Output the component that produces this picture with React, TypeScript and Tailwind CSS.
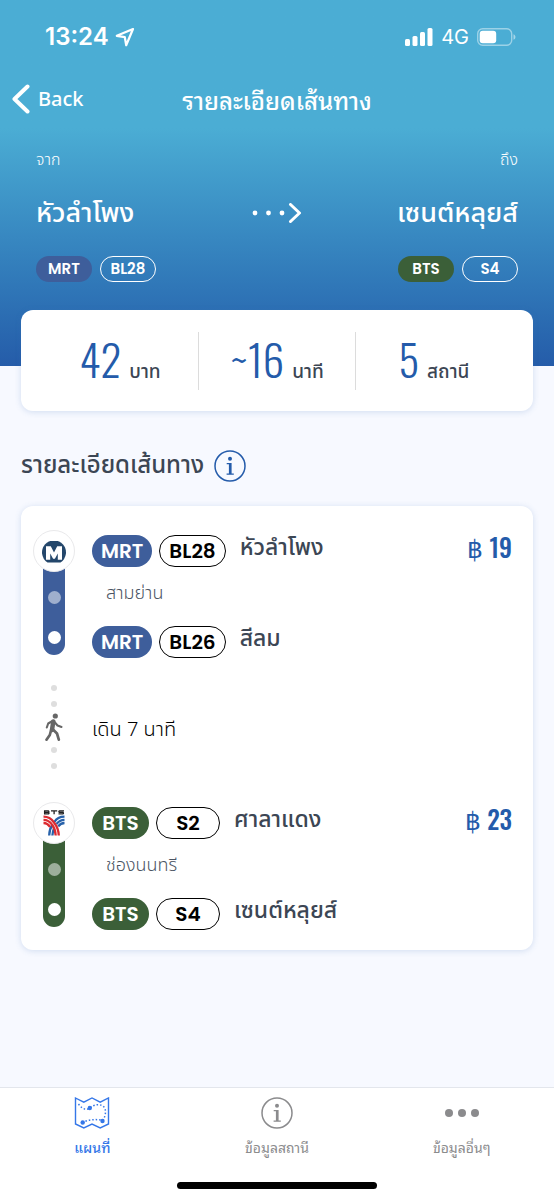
import type { ReactNode } from "react";

const THAI = "font-['Noto_Sans_Thai','Noto_Sans',sans-serif]";
const LOOPED = "font-['Noto_Sans_Thai_Looped','Loma','Garuda','Noto_Serif_Thai','Noto_Sans_Thai',sans-serif]";
const NARROW = "font-['Oswald','Roboto_Condensed','Liberation_Sans_Narrow',sans-serif]";
const LATIN = "font-['Poppins','Inter',sans-serif]";

type Line = "MRT" | "BTS";

const lineFill: Record<Line, string> = {
  MRT: "bg-[#3e5e9b]",
  BTS: "bg-[#3b5f38]",
};

function StatusBar() {
  return (
    <div className="flex h-[74px] items-center justify-between pr-[38px] pl-[45px] font-['Inter',sans-serif]">
      <div className="flex items-center gap-1.5 text-2xl font-semibold">
        <span>13:24</span>
        <svg className="h-5 w-5" viewBox="0 0 20 20" fill="none" stroke="currentColor" strokeWidth="2.2" strokeLinejoin="round" aria-hidden="true">
          <path d="M18 2 1.8 8.8 9.8 10.2 11.2 18.2Z" />
        </svg>
      </div>
      <div className="flex items-center gap-2">
        <svg className="h-[18px] w-7" viewBox="0 0 28 18" fill="currentColor" aria-hidden="true">
          <rect x="0" y="11" width="5" height="7" rx="1.5" />
          <rect x="7.5" y="8" width="5" height="10" rx="1.5" />
          <rect x="15" y="4" width="5" height="14" rx="1.5" />
          <rect x="22.5" y="0" width="5" height="18" rx="1.5" />
        </svg>
        <span className="text-xl">4G</span>
        <svg className="h-[18px] w-[39px]" viewBox="0 0 39 18" aria-hidden="true">
          <rect x="0.7" y="0.7" width="34" height="16.6" rx="5" fill="none" stroke="#fff" strokeOpacity="0.45" strokeWidth="1.4" />
          <path d="M36.5 6.2c2.6 1 2.6 4.6 0 5.6Z" fill="#fff" fillOpacity="0.5" />
          <rect x="2.7" y="2.7" width="16.5" height="12.6" rx="3" fill="#fff" />
        </svg>
      </div>
    </div>
  );
}

function SmallBadges({ line, code }: { line: Line; code: string }) {
  return (
    <div className={`${LATIN} flex gap-2 text-[15px] font-semibold`}>
      <span className={`flex h-[26px] w-14 items-center justify-center rounded-full ${lineFill[line]}`}>{line}</span>
      <span className="flex h-[26px] w-14 items-center justify-center rounded-full border border-white">{code}</span>
    </div>
  );
}

function Stat({ value, unit }: { value: string; unit: string }) {
  return (
    <div className="flex h-[58px] flex-1 items-center justify-center">
      <p className="flex items-baseline gap-2">
        <span className={`${NARROW} text-[43px] leading-[50px] font-light text-[#245baa]`}>{value}</span>
        <span className={`${THAI} text-[19px] font-medium text-[#3c4654]`}>{unit}</span>
      </p>
    </div>
  );
}

function Station({ line, code, name, price }: { line: Line; code: string; name: string; price?: string }) {
  return (
    <div className={`${LATIN} flex h-8 items-center text-xl font-semibold`}>
      <span className={`flex h-8 min-w-[57px] items-center justify-center rounded-full px-[9px] text-white ${lineFill[line]}`}>{line}</span>
      <span className="ml-[7px] flex h-8 min-w-16 items-center justify-center rounded-full border border-black px-[9px] text-black">{code}</span>
      <span className={`${THAI} ml-3.5 pb-1.5 text-[23px] font-medium text-[#3c4654]`}>{name}</span>
      {price && (
        <span className={`${NARROW} ml-auto pb-2.5 text-[25px] font-medium text-[#245baa]`}>
          <span className="font-normal">฿</span> {price}
        </span>
      )}
    </div>
  );
}

function Leg({ line, logo, children }: { line: Line; logo: ReactNode; children: ReactNode }) {
  return (
    <div className="flex gap-[17px]">
      <div className="flex h-[125px] w-[42px] flex-col items-center">
        <div className="z-10 flex h-[42px] w-[42px] shrink-0 items-center justify-center rounded-full border border-[#e9e9eb] bg-white">{logo}</div>
        <div className={`-mt-1 flex w-[22px] flex-1 flex-col items-center justify-between rounded-b-full pt-[23px] pb-[11px] ${lineFill[line]}`}>
          <span className="h-[13px] w-[13px] rounded-full bg-white/50" />
          <span className="h-[13px] w-[13px] rounded-full bg-white" />
        </div>
      </div>
      <div className="min-w-0 flex-1 pt-[5px]">{children}</div>
    </div>
  );
}

function Stop({ name }: { name: string }) {
  return <p className={`${THAI} flex h-[59px] items-center pb-1.5 pl-3.5 text-lg font-light text-[#4b5563]`}>{name}</p>;
}

function MrtLogo() {
  return (
    <svg className="mt-1 h-6 w-6" viewBox="0 0 24 24" role="img" aria-label="MRT">
      <path d="M5.500 21.500A12 12 0 1 1 18.500 21.500Z" fill="#24476b" />
      <path d="M4 18.800V5.200H8.800L12 11.500 15.200 5.200H20V18.800H15.800V12.500L12.900 17.800H11.100L8.200 12.500V18.800Z" fill="#fff" />
    </svg>
  );
}

function BtsLogo() {
  return (
    <svg className="h-[26px] w-[22px]" viewBox="0 0 22 26" fill="none" role="img" aria-label="BTS">
      <g stroke="#222" strokeWidth="1.3">
        <path d="M1 .8H5.300Q6.500 1.700 5.300 2.400H1.500M1 3.900H5.400Q6.600 3.100 5.400 2.400M1.600 .8V3.900" />
        <path d="M8 .9H14.200M11.100 .9V4.300M21 .9H16.500Q15.200 1.600 16.500 2.400H19.800Q21.100 3.100 19.800 3.900H15.500" />
      </g>
      <g strokeWidth="2.3">
        <path d="M21.500 6.700Q14.500 6.700 11.400 12M21.500 9.800Q16.500 9.800 13.500 14M21.500 13Q17.500 13 15.300 16.500M9.300 15Q6.400 19 6.200 25.500M11 18.500Q9.800 21 9.400 25.500" stroke="#2862aa" />
        <path d="M.5 6.700Q7 6.700 11 12.500 15.500 18 15.800 25.500M.5 9.800Q5.800 9.800 9.200 14.800 12.300 19 12.700 25.500M.5 13Q4.500 13 7 17" stroke="#dc2c32" />
      </g>
    </svg>
  );
}

function InfoIcon({ className }: { className: string }) {
  return (
    <svg className={className} viewBox="0 0 32 32" fill="none" aria-hidden="true">
      <circle cx="16" cy="16" r="15" stroke="currentColor" strokeWidth="1.5" />
      <circle cx="16" cy="8.700" r="2" fill="currentColor" />
      <path d="M12.700 13H17.600V23.500H19.800V24.800H12.600V23.500H14.900V14.300H12.700Z" fill="currentColor" />
    </svg>
  );
}

function MapIcon() {
  return (
    <svg className="h-8 w-9" viewBox="0 0 36 32" fill="none" stroke="currentColor" aria-hidden="true">
      <path d="M1.500 1 9.800 5.200 18 1 26.200 5.200 34.500 1V27L26.200 31 18 27 9.800 31 1.500 27Z" strokeWidth="1.400" />
      <path d="M4.500 7Q10 14.500 15.500 11.300 23 5.500 29 9 34 13.500 29 23.500 18 21 8.500 25.500" strokeWidth="1.500" strokeDasharray="1.500 2" />
      <g fill="currentColor" stroke="none">
        <circle cx="15.800" cy="11" r="2.200" />
        <circle cx="28.500" cy="24" r="2.200" />
        <circle cx="8.700" cy="25.500" r="2.200" />
      </g>
    </svg>
  );
}

function WalkIcon() {
  return (
    <svg className="h-7 w-[18px]" viewBox="0 0 18 28" fill="none" stroke="#666" strokeLinecap="round" strokeLinejoin="round" role="img" aria-label="เดิน">
      <circle cx="10.300" cy="3" r="2.600" fill="#666" stroke="none" />
      <path d="M8.300 8.500 7 17" strokeWidth="4.500" />
      <path d="M7.500 8 3.200 10.500 1.800 14.500M9.500 9 12.500 12.500 16.500 14" strokeWidth="2.100" />
      <path d="M6 17.500 4.800 22 1.500 26.700M8.500 17 12 20.500 13.800 26.700" strokeWidth="2.700" />
    </svg>
  );
}

function WalkDots() {
  return (
    <div className="flex flex-col gap-2.5">
      <span className="h-1.5 w-1.5 rounded-full bg-[#dedede]" />
      <span className="h-1.5 w-1.5 rounded-full bg-[#dedede]" />
    </div>
  );
}

function Tab({ label, active, children }: { label: string; active?: boolean; children: ReactNode }) {
  return (
    <a
      href="#"
      aria-current={active ? "page" : undefined}
      className={`flex flex-1 flex-col items-center gap-1 ${active ? "font-medium text-[#3577e8]" : "text-[#8b8b8d]"}`}
    >
      <span className="flex h-8 items-center">{children}</span>
      <span className={`${LOOPED} text-sm leading-7`}>{label}</span>
    </a>
  );
}

export default function App() {
  return (
    <div className={`${THAI} flex min-h-screen flex-col bg-[#f7f9ff]`}>
      <header className="bg-linear-to-b from-[#4badd4] from-35% to-[#255ca9] pb-14 text-white">
        <StatusBar />
        <nav className="grid h-[50px] grid-cols-[1fr_auto_1fr] items-center px-3">
          <button type="button" className="flex items-center gap-2 justify-self-start font-['Noto_Sans',sans-serif] text-xl font-medium">
            <svg className="h-[30px] w-[18px]" viewBox="0 0 18 30" fill="none" stroke="currentColor" strokeWidth="4" strokeLinecap="round" strokeLinejoin="round" aria-hidden="true">
              <path d="M15.500 2.500 2.500 15 15.500 27.500" />
            </svg>
            Back
          </button>
          <h1 className={`${LOOPED} text-2xl leading-9 font-medium`}>รายละเอียดเส้นทาง</h1>
        </nav>
        <div className="px-9 pt-[22px]">
          <div className="flex h-7 items-center justify-between text-base font-light">
            <span>จาก</span>
            <span>ถึง</span>
          </div>
          <div className="mt-5 grid h-10 grid-cols-[1fr_auto_1fr] items-center text-[27px] font-medium">
            <span>หัวลำโพง</span>
            <svg className="h-[22px] w-[50px]" viewBox="0 0 50 22" fill="none" stroke="currentColor" strokeWidth="3" strokeLinecap="round" strokeLinejoin="round" aria-hidden="true">
              <g fill="currentColor" stroke="none">
                <circle cx="3" cy="10" r="2.400" />
                <circle cx="16.500" cy="10" r="2.400" />
                <circle cx="30" cy="10" r="2.400" />
              </g>
              <path d="M38.500 1.500 47.500 10 38.500 18.500" />
            </svg>
            <span className="text-right">เซนต์หลุยส์</span>
          </div>
          <div className="mt-[22px] mb-7 flex justify-between">
            <SmallBadges line="MRT" code="BL28" />
            <SmallBadges line="BTS" code="S4" />
          </div>
        </div>
      </header>

      <main className="flex-1 px-[21px] pb-10">
        <section className="-mt-14 flex h-[101px] items-center divide-x divide-[#dcdcdc] rounded-xl bg-white px-[21px] shadow-[0_1px_6px_rgba(60,110,180,0.2)]">
          <Stat value="42" unit="บาท" />
          <Stat value="~16" unit="นาที" />
          <Stat value="5" unit="สถานี" />
        </section>

        <div className="mt-[37px] flex h-9 items-center gap-2.5">
          <h2 className="text-2xl font-medium text-[#3c4654]">รายละเอียดเส้นทาง</h2>
          <button type="button" aria-label="ข้อมูล" className="text-[#245baa]">
            <InfoIcon className="h-8 w-8" />
          </button>
        </div>

        <section className="mt-[22px] rounded-xl bg-white pt-6 pr-[21px] pb-5 pl-3 shadow-[0_1px_6px_rgba(60,110,180,0.2)]">
          <Leg line="MRT" logo={<MrtLogo />}>
            <Station line="MRT" code="BL28" name="หัวลำโพง" price="19" />
            <Stop name="สามย่าน" />
            <Station line="MRT" code="BL26" name="สีลม" />
          </Leg>
          <div className="flex h-36 items-center gap-[17px]">
            <div className="flex w-[42px] flex-col items-center gap-1.5 pb-1.5">
              <WalkDots />
              <WalkIcon />
              <WalkDots />
            </div>
            <p className="text-xl font-light text-black">เดิน 7 นาที</p>
          </div>
          <Leg line="BTS" logo={<BtsLogo />}>
            <Station line="BTS" code="S2" name="ศาลาแดง" price="23" />
            <Stop name="ช่องนนทรี" />
            <Station line="BTS" code="S4" name="เซนต์หลุยส์" />
          </Leg>
        </section>
      </main>

      <footer className="sticky bottom-0 z-20 border-t border-[#e3e6ec] bg-white pt-[9px] pb-[11px]">
        <nav className="flex h-[85px]">
          <Tab label="แผนที่" active>
            <MapIcon />
          </Tab>
          <Tab label="ข้อมูลสถานี">
            <InfoIcon className="h-8 w-8" />
          </Tab>
          <Tab label="ข้อมูลอื่นๆ">
            <svg className="h-2 w-[34px]" viewBox="0 0 34 8" fill="currentColor" aria-hidden="true">
              <circle cx="4" cy="4" r="4" />
              <circle cx="17" cy="4" r="4" />
              <circle cx="30" cy="4" r="4" />
            </svg>
          </Tab>
        </nav>
        <div className="mx-auto h-[7px] w-[36%] rounded-full bg-black" />
      </footer>
    </div>
  );
}
